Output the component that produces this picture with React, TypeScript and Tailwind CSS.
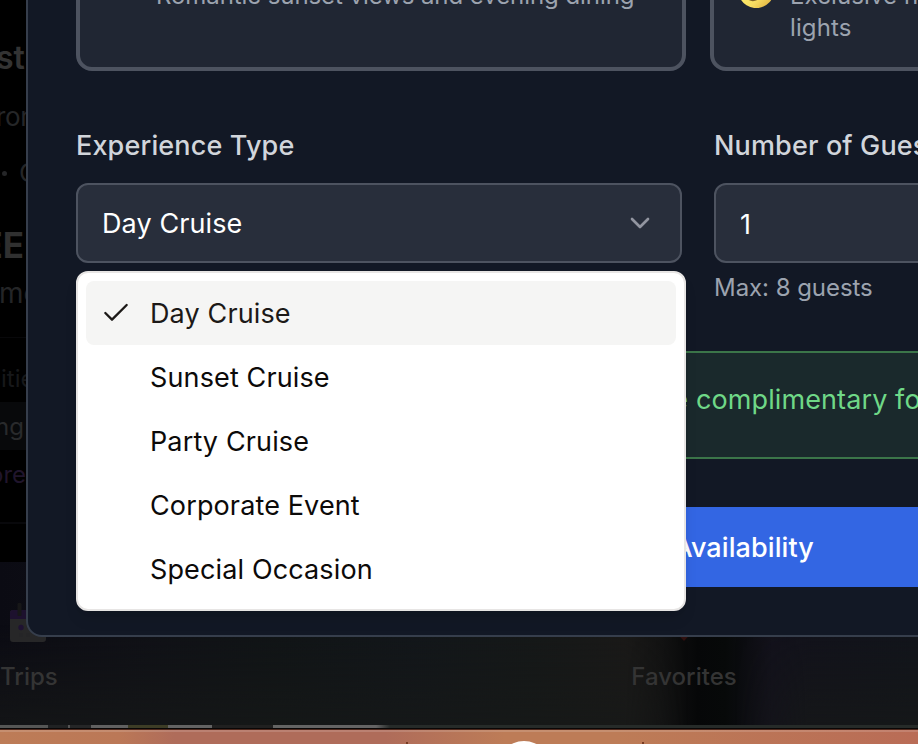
import { Check, ChevronDown } from "lucide-react";

const options = ["Day Cruise", "Sunset Cruise", "Party Cruise", "Corporate Event", "Special Occasion"];

function Backdrop() {
  return (
    <div className="flex h-[744px] w-[918px] flex-col bg-black">
      <div className="relative flex h-[562px] w-full flex-col overflow-hidden">
        <div className="flex h-[86px] items-end text-[32px] leading-[57px] font-semibold text-[#333333]">
          <span className="-ml-[4px]">st</span>
        </div>
        <div className="-ml-[4px] h-[60px] text-[26px] leading-[62px] tracking-[-0.4px] text-[#252628]">ron</div>
        <div className="flex h-[54px] items-center text-[26px] leading-[52px] text-[#252628]">
          <span className="ml-[2px] size-[5px] rounded-full bg-current" />
          <span className="ml-[12px]">C</span>
        </div>
        <div className="-ml-[18.5px] h-[68px] text-[35px] leading-[90px] font-bold text-[#303030]">EE</div>
        <div className="h-[70px] border-b border-[#08080a] text-[28px] leading-[51px] text-[#242527]">
          <span className="-ml-[1px]">me</span>
        </div>
        <div className="h-[64px] text-[24px] leading-[82px] text-[#17181a]">
          <span className="ml-[1px]">ities</span>
        </div>
        <div className="h-[48px] bg-[#08090b] text-[24px] leading-[50px] text-[#292a2c]">
          <span className="-ml-[5px]">ng</span>
        </div>
        <div className="h-[74px] border-b-2 border-[#08080b] text-[24px] leading-[50px] text-[#20152c]">
          <span className="-ml-[11px]">ore</span>
        </div>
      </div>
      <nav className="relative flex h-[163px] w-full shrink-0 bg-[linear-gradient(90deg,#0b0b13_0%,#0f1016_16%,#101416_30%,#12161a_45%,#151818_58%,#1a1918_68%,#121212_72%,#060708_76%,#070909_79%,#12111b_84%,#11141b_100%)]">
        <div className="absolute inset-x-0 bottom-0 h-[100px] bg-[linear-gradient(180deg,transparent,#171918b0)] [mask-image:linear-gradient(90deg,#000_0%,#000_68%,transparent_75%,transparent_80%,#000_88%)]" />
        <div className="relative flex w-[632px] flex-col">
          <svg className="mt-[39px] ml-[10px] h-[44px] w-[36px]" viewBox="0 0 36 44">
            <rect x="0" y="9" width="36" height="32" rx="3" fill="#272728" />
            <path d="M0 18V12Q0 9 3 9H33Q36 9 36 12V18Z" fill="#1d112e" />
            <rect x="7.5" y="2" width="4" height="13" rx="1" fill="#171718" />
            <circle cx="11" cy="26.500" r="2.700" fill="#1f1232" />
            <g fill="#252527"><circle cx="11" cy="34" r="2" /><circle cx="18" cy="34" r="2" /></g>
          </svg>
          <span className="mt-[20px] text-[24px] leading-[24px] font-medium text-[#343434]">Trips</span>
        </div>
        <div className="relative flex w-[104px] flex-col items-center">
          <svg className="mt-[42px] h-[37px] w-[40px]" viewBox="0 0 40 37">
            <path d="M20 37L2 18C-4 6 10-5 20 6C30-5 44 6 38 18Z" fill="#30100f" />
          </svg>
          <span className="mt-[24px] text-[24px] leading-[24px] font-medium text-[#343434]">Favorites</span>
        </div>
      </nav>
      <div className="h-[3px] w-full shrink-0 bg-[linear-gradient(90deg,#555655_0_48px,#202223_48px_68px,#555_68px_70px,#252627_70px_91px,#616161_91px_128px,#3d3d26_128px_168px,#636363_168px_212px,#202020_212px_273px,#646464_273px_376px,#262b29_390px_100%)]" />
      <div className="h-px w-full bg-[#090707]" />
      <div className="relative h-[15px] w-full overflow-hidden border-t border-[#4c261b] bg-[linear-gradient(90deg,#bd7c57_0%,#bb7857_13%,#af6c5a_19%,#af6c5a_42%,#bd7c57_55%,#bd7c57_67%,#b96c56_100%)]">
        <div className="h-[2px] w-full bg-white/15" />
        <div className="absolute top-[11px] left-[496px] size-[56px] rounded-full bg-white" />
        <div className="absolute top-[12px] left-[406px] h-[2px] w-[2px] bg-[#783c23]" />
        <div className="absolute top-[12px] left-[642px] h-[2px] w-[2px] bg-[#783c23]" />
      </div>
    </div>
  );
}

function ExperienceMenu() {
  return (
    <div className="absolute top-[88px] left-0 z-10 flex h-[340px] w-[610px] flex-col rounded-[12px] border-2 border-[#e7e5e4] bg-white p-2 shadow-lg">
      {options.map((name, i) => (
        <div
          key={name}
          className={
            i === 0
              ? "flex h-16 items-center rounded-[8px] bg-[#f5f5f4] pl-[14px] text-[#1c1917]"
              : "flex h-16 items-center pl-[14px] text-[#0c0a09]"
          }
        >
          <span className="w-[50px]">{i === 0 && <Check className="size-8" strokeWidth={1.75} />}</span>
          <span className="pt-[2px] text-[27px] leading-[28px] tracking-[0.13px]">{name}</span>
        </div>
      ))}
    </div>
  );
}

function BookingDialog() {
  return (
    <div className="absolute top-[-100px] left-[26px] flex h-[737px] w-[1320px] flex-col rounded-[16px] border-2 border-[#363e4c] bg-[#121825] px-12">
      <div className="flex h-[169px] shrink-0 gap-6">
        <div className="flex w-[610px] shrink-0 flex-col justify-end rounded-[16px] border-4 border-[#4d5360] bg-[#202633] pb-[55px] pl-[76px]">
          <p className="text-[24px] leading-8 tracking-[-0.07px] whitespace-nowrap text-[#9ca3af]">
            Romantic sunset views and evening dining
          </p>
        </div>
        <div className="flex w-[610px] shrink-0 items-end rounded-[16px] border-4 border-[#4d5360] bg-[#202633] pb-[23px] pl-[24px]">
          <svg className="mb-[36px] h-[36px] w-[36px] shrink-0" viewBox="0 0 36 36">
            <defs>
              <linearGradient id="moon" x1="0" y1="0" x2="1" y2="1">
                <stop offset="0.3" stopColor="#fff06b" />
                <stop offset="0.65" stopColor="#f7dc62" />
                <stop offset="1" stopColor="#d9a535" />
              </linearGradient>
            </defs>
            <path d="M22 1A18 18 0 1 1 1 24C14 32 29 19 22 1Z" fill="url(#moon)" transform="translate(0 -0.5)" />
            <path d="M10 27.500Q15 31 21 27Z" fill="#806327" />
          </svg>
          <p className="ml-[16px] text-[24px] leading-8 tracking-[0.1px] whitespace-nowrap text-[#9ca3af]">
            Exclusive nighttime cruise with city
            <br />
            lights
          </p>
        </div>
      </div>

      <div className="mt-[61px] flex gap-8">
        <div className="flex w-[606px] shrink-0 flex-col">
          <label className="text-[27px] leading-[28px] font-medium tracking-[0.15px] text-[#d1d5db]">Experience Type</label>
          <div className="relative mt-[23px]">
            <button className="flex h-20 w-full items-center justify-between rounded-[12px] border-2 border-[#4d5360] bg-[#282e3b] pr-[24px] pl-6 text-[27px] leading-[28px] text-white">
              <span className="pt-[2px] tracking-[0.1px]">Day Cruise</span>
              <ChevronDown className="size-8 text-[#9295a0]" strokeWidth={2} />
            </button>
            <ExperienceMenu />
          </div>
        </div>
        <div className="flex w-[606px] shrink-0 flex-col">
          <label className="text-[27px] leading-[28px] font-medium tracking-[0.15px] text-[#d1d5db]">Number of Guests</label>
          <div className="mt-[23px] flex h-20 w-full items-center rounded-[12px] border-2 border-[#4d5360] bg-[#282e3b] pt-[3px] pl-6 text-[27px] leading-[28px] text-white">
            1
          </div>
          <p className="mt-[9px] text-[24px] leading-8 tracking-[-0.05px] text-[#9ca3af]">Max: 8 guests</p>
        </div>
      </div>

      <div className="mt-[47px] flex h-[108px] shrink-0 rounded-[12px] border-2 border-[#3b7549] bg-[#1a292c] pt-[33px] pl-[26px] text-[27px] leading-[28px] tracking-[0.1px] whitespace-nowrap text-[#6fd887]">
        <span className="w-[584px] text-right">Your first experience will be</span>
        <span className="ml-[8px]">complimentary for members</span>
      </div>
      <button className="mt-12 flex h-20 shrink-0 items-center rounded-[12px] bg-[#3366e3] text-[27px] leading-[28px] font-medium text-white">
        <span className="w-[738px] pt-[2px] text-right tracking-[0.1px]">Check Availability</span>
      </button>
    </div>
  );
}

export default function App() {
  return (
    <main className="relative h-[744px] w-[918px] overflow-hidden font-['Inter','Liberation_Sans',sans-serif]">
      <Backdrop />
      <BookingDialog />
    </main>
  );
}
